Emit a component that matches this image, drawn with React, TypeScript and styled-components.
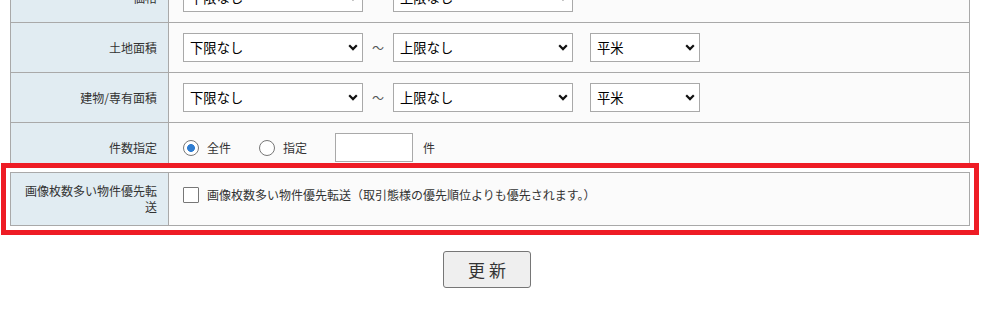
import React from 'react';
import styled, { createGlobalStyle } from 'styled-components';

const GlobalStyle = createGlobalStyle`
  html, body {
    margin: 0;
    padding: 0;
    background: #fff;
  }
  body {
    font-family: "Noto Sans CJK JP", "Noto Sans", sans-serif;
    color: #333;
  }
`;

type Range = { label: string; unit?: string };

const ranges: Range[] = [
  { label: '価格' },
  { label: '土地面積', unit: '平米' },
  { label: '建物/専有面積', unit: '平米' },
];

function Chevron() {
  return (
    <ChevronIcon width="10" height="7" viewBox="0 0 10 7">
      <path d="M1.2 1.3 5 5.1 8.8 1.3" fill="none" stroke="#111" strokeWidth="2.2" />
    </ChevronIcon>
  );
}

function Select({ value, width }: { value: string; width: number }) {
  return (
    <SelectWrap>
      <SelectBox $width={width} defaultValue={value}>
        <option value={value}>{value}</option>
      </SelectBox>
      <Chevron />
    </SelectWrap>
  );
}

function App() {
  return (
    <>
      <GlobalStyle />
      <Page>
        <FormTable>
          {ranges.map(r => (
            <Row key={r.label}>
              <Label>{r.label}</Label>
              <Content>
                <Select value="下限なし" width={180} />
                <Tilde>～</Tilde>
                <Select value="上限なし" width={180} />
                {r.unit && (
                  <UnitGap>
                    <Select value={r.unit} width={110} />
                  </UnitGap>
                )}
              </Content>
            </Row>
          ))}
          <Row>
            <Label>件数指定</Label>
            <Content>
              <RadioLabel>
                <Radio type="radio" name="count" defaultChecked />
                全件
              </RadioLabel>
              <RadioLabel>
                <Radio type="radio" name="count" />
                指定
              </RadioLabel>
              <CountInput type="text" />
              <Unit>件</Unit>
            </Content>
          </Row>
        </FormTable>
        <HighlightTable>
          <Row $tall>
            <Label>画像枚数多い物件優先転送</Label>
            <Content $top>
              <CheckLabel>
                <Check type="checkbox" />
                画像枚数多い物件優先転送（取引態様の優先順位よりも優先されます。）
              </CheckLabel>
            </Content>
          </Row>
        </HighlightTable>
        <ButtonRow>
          <UpdateButton type="button">更 新</UpdateButton>
        </ButtonRow>
      </Page>
    </>
  );
}
export default App;

const Page = styled.div`
  width: 960px;
  margin: -28px 0 0 10px;
`;

const FormTable = styled.div`
  box-sizing: border-box;
  width: 960px;
  border: 1px solid #a9a9a9;
  border-bottom: none;
  background: #fbfbfb;
`;

const HighlightTable = styled(FormTable)`
  position: relative;
  z-index: 1;
  margin-top: -1px;
  border-bottom: 1px solid #a9a9a9;
  box-shadow: 0 0 0 4px #fff;
  outline: 5px solid #ee1c25;
  outline-offset: 4px;
`;

const Row = styled.div<{ $tall?: boolean }>`
  display: grid;
  grid-template-columns: 158px 1fr;
  min-height: ${props => (props.$tall ? '52px' : '49px')};
  border-bottom: ${props => (props.$tall ? 'none' : '1px solid #a9a9a9')};
`;

const Label = styled.div`
  box-sizing: border-box;
  display: flex;
  align-items: center;
  justify-content: flex-end;
  text-align: right;
  padding: 0 11px 0 10px;
  background: #e1ecf2;
  border-right: 1px solid #a9a9a9;
  font-size: 12px;
  line-height: 16px;
  color: #333;
`;

const Content = styled.div<{ $top?: boolean }>`
  display: flex;
  align-items: ${props => (props.$top ? 'flex-start' : 'center')};
  padding: ${props => (props.$top ? '14px 14px 0' : '0 14px')};
  font-size: 12px;
  color: #333;
`;

const SelectWrap = styled.span`
  position: relative;
  display: inline-flex;
`;

const SelectBox = styled.select<{ $width: number }>`
  appearance: none;
  box-sizing: border-box;
  width: ${props => props.$width}px;
  height: 29px;
  margin: 0;
  padding: 0 20px 0 6px;
  border: 1px solid #a9a9a9;
  border-radius: 0;
  background: #fff;
  color: #000;
  font-family: "Noto Sans CJK JP", sans-serif;
  font-size: 13.33px;
  outline: none;
`;

const ChevronIcon = styled.svg`
  position: absolute;
  right: 5px;
  top: 11px;
  pointer-events: none;
`;

const Tilde = styled.span`
  margin: 0 9px;
  font-size: 12px;
  color: #555;
`;

const UnitGap = styled.span`
  display: inline-flex;
  margin-left: 17px;
`;

const RadioLabel = styled.label`
  display: inline-flex;
  align-items: center;
  gap: 8px;
  margin-right: 28px;
  font-size: 12px;
  color: #333;
`;

const Radio = styled.input`
  appearance: none;
  box-sizing: border-box;
  width: 16px;
  height: 16px;
  margin: 0;
  border: 1px solid #777;
  border-radius: 50%;
  background: #fff;
  &:checked {
    background: radial-gradient(circle, #2f7dd1 0 3.6px, #fff 4.2px);
  }
`;

const CountInput = styled.input`
  box-sizing: border-box;
  width: 78px;
  height: 29px;
  margin: 0;
  border: 1px solid #a9a9a9;
  background: #fff;
`;

const Unit = styled.span`
  margin-left: 10px;
  font-size: 12px;
  color: #333;
`;

const CheckLabel = styled.label`
  display: inline-flex;
  align-items: center;
  gap: 8px;
  font-size: 12px;
  line-height: 16px;
  color: #333;
`;

const Check = styled.input`
  appearance: none;
  box-sizing: border-box;
  width: 16px;
  height: 16px;
  margin: 0;
  border: 1px solid #777;
  border-radius: 1px;
  background: #fff;
`;

const ButtonRow = styled.div`
  display: flex;
  justify-content: center;
  padding-right: 6px;
  margin-top: 25px;
`;

const UpdateButton = styled.button`
  box-sizing: border-box;
  width: 88px;
  height: 37px;
  border: 1px solid #767676;
  border-radius: 3px;
  background: #efefef;
  color: #333;
  font-family: "Noto Sans CJK JP", sans-serif;
  font-size: 17px;
  padding: 0;
`;
